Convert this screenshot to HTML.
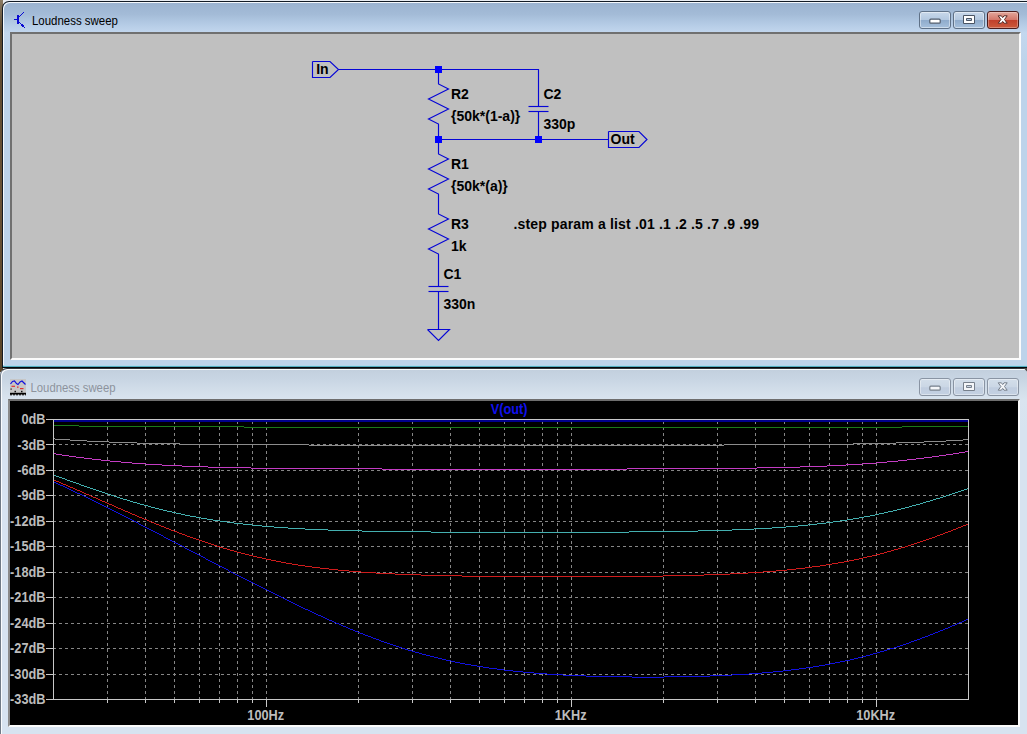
<!DOCTYPE html>
<html><head><meta charset="utf-8"><title>Loudness sweep</title>
<style>
html,body{margin:0;padding:0;}
body{width:1027px;height:734px;overflow:hidden;position:relative;background:#e9edf2;font-family:"Liberation Sans",sans-serif;}
.win{position:absolute;box-sizing:border-box;}
#w1{left:2px;top:1px;width:1040px;height:367px;border:1px solid #141c26;border-bottom-color:#04080c;border-radius:7px 7px 0 0;
 background:linear-gradient(to bottom,#9bb3d0 0px,#a3bbd7 12px,#b4cbe5 22px,#c3d7ee 31px,#bdd3ea 60px,#bdd3ea 100%);
 box-shadow:inset 1px 1px 0 #f4f8fc;}
#w1 .bl{position:absolute;left:0;right:0;bottom:0;height:1px;background:#52acc0;}
#w1 .bl2{position:absolute;left:0;right:0;bottom:1px;height:1px;background:#b2d6ea;}
#c1{position:absolute;left:10px;top:32px;width:1011px;height:328px;box-sizing:border-box;background:#c0c0c0;
 border-top:2px solid #707070;border-left:2px solid #707070;border-right:2px solid #fbfbfb;border-bottom:2px solid #fbfbfb;}
#w2{left:0px;top:368px;width:1041px;height:380px;border:1px solid #707a86;border-top-color:#2c3238;border-radius:7px 7px 0 0;
 background:linear-gradient(to bottom,#c2cfdd 0px,#c8d5e3 10px,#d1dde9 20px,#d9e4ef 31px,#d7e3f0 60px,#d7e3f0 100%);
 box-shadow:inset 1px 1px 0 #fafcfe;}
#c2{position:absolute;left:8px;top:399px;width:1012px;height:328px;box-sizing:border-box;background:#000;
 border-top:2px solid #6e6e6e;border-left:2px solid #8a8a8a;border-right:2px solid #fbfbfb;border-bottom:2px solid #fbfbfb;}
.title{position:absolute;font-size:12.4px;white-space:nowrap;}
.btn{position:absolute;box-sizing:border-box;width:32px;height:18px;border-radius:3px;}
.b1{border:1px solid #5f7187;background:linear-gradient(to bottom,#c8d8ea 0,#b3c8e0 48%,#8fabcb 52%,#a6c0dc 100%);box-shadow:inset 0 0 0 1px rgba(255,255,255,.45);}
.b1.close{border:1px solid #4a1c1c;background:linear-gradient(to bottom,#e3a79c 0,#d4776a 48%,#c0402c 52%,#cc5a3c 100%);box-shadow:inset 0 0 0 1px rgba(255,255,255,.3);}
.b2{border:1px solid #8994a3;background:linear-gradient(to bottom,#d3deea 0,#cbd7e5 48%,#c0cddf 55%,#c4d1e2 100%);box-shadow:inset 0 0 0 1px rgba(255,255,255,.4);}
svg{position:absolute;left:0;top:0;}
</style></head><body>
<div style="position:absolute;left:0;top:0;width:3px;height:372px;background:linear-gradient(to bottom,#8a7a62 0,#5e4a30 30px,#6a5236 200px,#5a4428 372px);"></div>
<div class="win" id="w1"><div class="bl2"></div><div class="bl"></div></div>
<div id="c1"></div>
<div class="win" id="w2"></div>
<div id="c2"></div>
<div class="btn b1" style="left:919px;top:11px;"></div>
<div class="btn b1" style="left:953px;top:11px;"></div>
<div class="btn b1 close" style="left:987px;top:11px;"></div>
<div class="btn b2" style="left:919px;top:378px;"></div>
<div class="btn b2" style="left:953px;top:378px;"></div>
<div class="btn b2" style="left:987px;top:378px;"></div>
<svg width="1027" height="734" viewBox="0 0 1027 734">
<g font-family="Liberation Sans, sans-serif" font-size="12.2px">
<text x="32" y="25" textLength="86" lengthAdjust="spacingAndGlyphs" fill="#000">Loudness sweep</text>
<text x="30.5" y="391.6" textLength="85" lengthAdjust="spacingAndGlyphs" fill="#8d939d">Loudness sweep</text>
</g>
<g fill="none" stroke="#0606d6" stroke-width="1.15" stroke-linejoin="miter"><polyline points="338.5,69.5 538.5,69.5 538.5,89.0"/><polyline points="438.5,69.5 438.5,79.0"/><polyline points="438.5,79.0 438.5,84.0 448.5,89.0 428.5,99.0 448.5,109.0 428.5,119.0 438.5,124.0 438.5,129.0"/><polyline points="438.5,129.0 438.5,149.0"/><polyline points="538.5,89.0 538.5,106.5"/><polyline points="538.5,111.5 538.5,129.0"/><polyline points="528.5,106.5 548.5,106.5"/><polyline points="528.5,111.5 548.5,111.5"/><polyline points="538.5,129.0 538.5,139.5"/><polyline points="438.5,139.5 608.0,139.5"/><polyline points="438.5,149.0 438.5,154.0 448.5,159.0 428.5,169.0 448.5,179.0 428.5,189.0 438.5,194.0 438.5,199.0"/><polyline points="438.5,199.0 438.5,209.0"/><polyline points="438.5,209.0 438.5,214.0 448.5,219.0 428.5,229.0 448.5,239.0 428.5,249.0 438.5,254.0 438.5,259.0"/><polyline points="438.5,259.0 438.5,269.0"/><polyline points="438.5,269.0 438.5,286.5"/><polyline points="438.5,291.5 438.5,309.0"/><polyline points="428.5,286.5 448.5,286.5"/><polyline points="428.5,291.5 448.5,291.5"/><polyline points="438.5,309.0 438.5,329.5"/><polyline points="427.5,329.5 449.5,329.5 438.5,340.5 427.5,329.5"/><polyline points="312.5,61.5 330.0,61.5 338.5,69.5 330.0,77.5 312.5,77.5 312.5,61.5"/><polyline points="608.5,131.5 639.0,131.5 647.0,139.5 639.0,147.5 608.5,147.5 608.5,131.5"/></g><rect x="435.0" y="66.0" width="7" height="7" fill="#0000ff" shape-rendering="crispEdges"/><rect x="435.0" y="136.0" width="7" height="7" fill="#0000ff" shape-rendering="crispEdges"/><rect x="535.0" y="136.0" width="7" height="7" fill="#0000ff" shape-rendering="crispEdges"/><g fill="#000" font-family="Liberation Sans, sans-serif" font-weight="bold" font-size="14px"><text x="451.0" y="98.6">R2</text><text x="451.0" y="120.6">{50k*(1-a)}</text><text x="451.0" y="168.6">R1</text><text x="451.0" y="190.6">{50k*(a)}</text><text x="451.0" y="228.6">R3</text><text x="451.0" y="250.6">1k</text><text x="443.5" y="278.6">C1</text><text x="443.5" y="308.6">330n</text><text x="543.5" y="98.6">C2</text><text x="543.5" y="128.6">330p</text><text x="513.5" y="228.8" textLength="245.5" lengthAdjust="spacing">.step param a list .01 .1 .2 .5 .7 .9 .99</text><text x="316.2" y="74.4">In</text><text x="610.5" y="144.4">Out</text></g>
<g stroke="#868686" stroke-width="1" stroke-dasharray="3 3" shape-rendering="crispEdges"><line x1="107.5" y1="421" x2="107.5" y2="699"/><line x1="145.5" y1="421" x2="145.5" y2="699"/><line x1="174.5" y1="421" x2="174.5" y2="699"/><line x1="199.5" y1="421" x2="199.5" y2="699"/><line x1="219.5" y1="421" x2="219.5" y2="699"/><line x1="237.5" y1="421" x2="237.5" y2="699"/><line x1="252.5" y1="421" x2="252.5" y2="699"/><line x1="266.5" y1="421" x2="266.5" y2="699"/><line x1="358.5" y1="421" x2="358.5" y2="699"/><line x1="412.5" y1="421" x2="412.5" y2="699"/><line x1="450.5" y1="421" x2="450.5" y2="699"/><line x1="479.5" y1="421" x2="479.5" y2="699"/><line x1="504.5" y1="421" x2="504.5" y2="699"/><line x1="524.5" y1="421" x2="524.5" y2="699"/><line x1="542.5" y1="421" x2="542.5" y2="699"/><line x1="557.5" y1="421" x2="557.5" y2="699"/><line x1="571.5" y1="421" x2="571.5" y2="699"/><line x1="663.5" y1="421" x2="663.5" y2="699"/><line x1="717.5" y1="421" x2="717.5" y2="699"/><line x1="755.5" y1="421" x2="755.5" y2="699"/><line x1="784.5" y1="421" x2="784.5" y2="699"/><line x1="809.5" y1="421" x2="809.5" y2="699"/><line x1="829.5" y1="421" x2="829.5" y2="699"/><line x1="847.5" y1="421" x2="847.5" y2="699"/><line x1="862.5" y1="421" x2="862.5" y2="699"/><line x1="876.5" y1="421" x2="876.5" y2="699"/><line x1="53" y1="444.5" x2="968" y2="444.5"/><line x1="53" y1="470.5" x2="968" y2="470.5"/><line x1="53" y1="495.5" x2="968" y2="495.5"/><line x1="53" y1="521.5" x2="968" y2="521.5"/><line x1="53" y1="546.5" x2="968" y2="546.5"/><line x1="53" y1="572.5" x2="968" y2="572.5"/><line x1="53" y1="597.5" x2="968" y2="597.5"/><line x1="53" y1="623.5" x2="968" y2="623.5"/><line x1="53" y1="648.5" x2="968" y2="648.5"/><line x1="53" y1="674.5" x2="968" y2="674.5"/></g>
<g fill="none" shape-rendering="crispEdges"><path d="M54 482.5h2M56 483.5h2M58 484.5h2M60 485.5h3M63 486.5h2M65 487.5h2M67 488.5h2M69 489.5h2M71 490.5h2M73 491.5h2M75 492.5h2M77 493.5h3M80 494.5h2M82 495.5h2M84 496.5h2M86 497.5h2M88 498.5h2M90 499.5h2M92 500.5h2M94 501.5h2M96 502.5h2M98 503.5h2M100 504.5h2M102 505.5h2M104 506.5h2M106 507.5h2M108 508.5h2M110 509.5h2M112 510.5h2M114 511.5h2M116 512.5h2M118 513.5h2M120 514.5h2M122 515.5h2M124 516.5h2M126 517.5h2M128 518.5h2M130 519.5h2M132 520.5h2M134 521.5h2M136 522.5h2M138 523.5h1M139 524.5h2M141 525.5h2M143 526.5h2M145 527.5h2M147 528.5h2M149 529.5h2M151 530.5h2M153 531.5h2M155 532.5h2M157 533.5h2M159 534.5h2M161 535.5h2M163 536.5h1M164 537.5h2M166 538.5h2M168 539.5h2M170 540.5h2M172 541.5h2M174 542.5h2M176 543.5h2M178 544.5h2M180 545.5h2M182 546.5h2M184 547.5h1M185 548.5h2M187 549.5h2M189 550.5h2M191 551.5h2M193 552.5h2M195 553.5h2M197 554.5h2M199 555.5h2M201 556.5h2M203 557.5h2M205 558.5h1M206 559.5h2M208 560.5h2M210 561.5h2M212 562.5h2M214 563.5h2M216 564.5h2M218 565.5h2M220 566.5h2M222 567.5h2M224 568.5h2M226 569.5h2M228 570.5h1M229 571.5h2M231 572.5h2M233 573.5h2M235 574.5h2M237 575.5h2M239 576.5h2M241 577.5h2M243 578.5h2M245 579.5h2M247 580.5h2M249 581.5h2M251 582.5h2M253 583.5h2M255 584.5h2M257 585.5h2M259 586.5h2M261 587.5h2M263 588.5h2M265 589.5h2M267 590.5h2M269 591.5h2M271 592.5h2M273 593.5h2M275 594.5h2M277 595.5h2M279 596.5h2M281 597.5h2M283 598.5h2M285 599.5h2M287 600.5h2M289 601.5h2M291 602.5h2M293 603.5h2M295 604.5h2M297 605.5h2M299 606.5h2M301 607.5h2M303 608.5h2M305 609.5h3M308 610.5h2M310 611.5h2M312 612.5h2M314 613.5h2M316 614.5h2M318 615.5h3M321 616.5h2M323 617.5h2M325 618.5h2M327 619.5h2M329 620.5h3M332 621.5h2M334 622.5h2M336 623.5h3M339 624.5h2M341 625.5h2M343 626.5h3M346 627.5h2M348 628.5h2M350 629.5h3M353 630.5h2M355 631.5h3M358 632.5h2M360 633.5h3M363 634.5h2M365 635.5h3M368 636.5h3M371 637.5h2M373 638.5h3M376 639.5h3M379 640.5h2M381 641.5h3M384 642.5h3M387 643.5h3M390 644.5h3M393 645.5h3M396 646.5h3M399 647.5h3M402 648.5h3M405 649.5h3M408 650.5h4M412 651.5h3M415 652.5h4M419 653.5h3M422 654.5h4M426 655.5h4M430 656.5h4M434 657.5h4M438 658.5h4M442 659.5h4M446 660.5h5M451 661.5h4M455 662.5h5M460 663.5h5M465 664.5h6M471 665.5h6M477 666.5h6M483 667.5h6M489 668.5h8M497 669.5h7M504 670.5h9M513 671.5h10M523 672.5h11M534 673.5h13M547 674.5h16M563 675.5h23M586 676.5h46M632 677.5h32M664 676.5h46M710 675.5h22M732 674.5h17M749 673.5h13M762 672.5h11M773 671.5h10M783 670.5h8M791 669.5h8M799 668.5h7M806 667.5h7M813 666.5h6M819 665.5h6M825 664.5h5M830 663.5h5M835 662.5h5M840 661.5h5M845 660.5h5M850 659.5h4M854 658.5h4M858 657.5h4M862 656.5h4M866 655.5h4M870 654.5h3M873 653.5h4M877 652.5h3M880 651.5h4M884 650.5h3M887 649.5h3M890 648.5h4M894 647.5h3M897 646.5h3M900 645.5h3M903 644.5h3M906 643.5h3M909 642.5h2M911 641.5h3M914 640.5h3M917 639.5h3M920 638.5h2M922 637.5h3M925 636.5h3M928 635.5h2M930 634.5h3M933 633.5h2M935 632.5h3M938 631.5h2M940 630.5h3M943 629.5h2M945 628.5h3M948 627.5h2M950 626.5h2M952 625.5h3M955 624.5h2M957 623.5h2M959 622.5h3M962 621.5h2M964 620.5h2M966 619.5h2M968 618.5h1" stroke="#1212e0" stroke-width="1"/><path d="M54 480.5h2M56 481.5h3M59 482.5h2M61 483.5h2M63 484.5h3M66 485.5h2M68 486.5h2M70 487.5h3M73 488.5h2M75 489.5h2M77 490.5h3M80 491.5h2M82 492.5h2M84 493.5h2M86 494.5h3M89 495.5h2M91 496.5h2M93 497.5h3M96 498.5h2M98 499.5h2M100 500.5h2M102 501.5h3M105 502.5h2M107 503.5h2M109 504.5h3M112 505.5h2M114 506.5h2M116 507.5h2M118 508.5h3M121 509.5h2M123 510.5h2M125 511.5h3M128 512.5h2M130 513.5h2M132 514.5h3M135 515.5h2M137 516.5h2M139 517.5h3M142 518.5h2M144 519.5h3M147 520.5h2M149 521.5h2M151 522.5h3M154 523.5h2M156 524.5h3M159 525.5h2M161 526.5h3M164 527.5h2M166 528.5h3M169 529.5h2M171 530.5h3M174 531.5h3M177 532.5h2M179 533.5h3M182 534.5h3M185 535.5h2M187 536.5h3M190 537.5h3M193 538.5h3M196 539.5h3M199 540.5h3M202 541.5h3M205 542.5h3M208 543.5h3M211 544.5h3M214 545.5h3M217 546.5h3M220 547.5h3M223 548.5h4M227 549.5h3M230 550.5h4M234 551.5h3M237 552.5h4M241 553.5h4M245 554.5h4M249 555.5h4M253 556.5h4M257 557.5h5M262 558.5h4M266 559.5h5M271 560.5h5M276 561.5h5M281 562.5h5M286 563.5h6M292 564.5h6M298 565.5h7M305 566.5h7M312 567.5h8M320 568.5h9M329 569.5h9M338 570.5h11M349 571.5h12M361 572.5h15M376 573.5h19M395 574.5h26M421 575.5h41M462 576.5h201M663 575.5h41M704 574.5h26M730 573.5h18M748 572.5h15M763 571.5h13M776 570.5h11M787 569.5h9M796 568.5h9M805 567.5h7M812 566.5h8M820 565.5h6M826 564.5h6M832 563.5h6M838 562.5h6M844 561.5h5M849 560.5h5M854 559.5h5M859 558.5h4M863 557.5h4M867 556.5h5M872 555.5h4M876 554.5h4M880 553.5h4M884 552.5h3M887 551.5h4M891 550.5h3M894 549.5h4M898 548.5h3M901 547.5h4M905 546.5h3M908 545.5h3M911 544.5h3M914 543.5h3M917 542.5h3M920 541.5h3M923 540.5h3M926 539.5h3M929 538.5h3M932 537.5h3M935 536.5h2M937 535.5h3M940 534.5h3M943 533.5h2M945 532.5h3M948 531.5h3M951 530.5h2M953 529.5h3M956 528.5h2M958 527.5h3M961 526.5h2M963 525.5h3M966 524.5h2M968 523.5h1" stroke="#d01c1c" stroke-width="1"/><path d="M54 475.5h2M56 476.5h3M59 477.5h3M62 478.5h3M65 479.5h2M67 480.5h3M70 481.5h3M73 482.5h3M76 483.5h3M79 484.5h2M81 485.5h3M84 486.5h3M87 487.5h3M90 488.5h3M93 489.5h3M96 490.5h3M99 491.5h3M102 492.5h3M105 493.5h3M108 494.5h3M111 495.5h3M114 496.5h3M117 497.5h3M120 498.5h3M123 499.5h4M127 500.5h3M130 501.5h3M133 502.5h4M137 503.5h3M140 504.5h4M144 505.5h4M148 506.5h3M151 507.5h4M155 508.5h4M159 509.5h4M163 510.5h4M167 511.5h5M172 512.5h4M176 513.5h5M181 514.5h4M185 515.5h5M190 516.5h6M196 517.5h5M201 518.5h6M207 519.5h6M213 520.5h7M220 521.5h7M227 522.5h7M234 523.5h9M243 524.5h9M252 525.5h10M262 526.5h12M274 527.5h14M288 528.5h17M305 529.5h23M328 530.5h34M362 531.5h69M431 532.5h198M629 531.5h69M698 530.5h34M732 529.5h22M754 528.5h18M772 527.5h14M786 526.5h12M798 525.5h10M808 524.5h9M817 523.5h9M826 522.5h7M833 521.5h7M840 520.5h7M847 519.5h6M853 518.5h6M859 517.5h5M864 516.5h6M870 515.5h5M875 514.5h4M879 513.5h5M884 512.5h4M888 511.5h5M893 510.5h4M897 509.5h4M901 508.5h4M905 507.5h4M909 506.5h3M912 505.5h4M916 504.5h4M920 503.5h3M923 502.5h3M926 501.5h4M930 500.5h3M933 499.5h3M936 498.5h4M940 497.5h3M943 496.5h3M946 495.5h3M949 494.5h3M952 493.5h3M955 492.5h3M958 491.5h3M961 490.5h3M964 489.5h3M967 488.5h2" stroke="#44b0b0" stroke-width="1"/><path d="M54 453.5h2M56 454.5h6M62 455.5h7M69 456.5h7M76 457.5h8M84 458.5h8M92 459.5h9M101 460.5h9M110 461.5h11M121 462.5h11M132 463.5h14M146 464.5h16M162 465.5h20M182 466.5h26M208 467.5h43M251 468.5h131M382 469.5h245M627 468.5h130M757 467.5h43M800 466.5h27M827 465.5h19M846 464.5h16M862 463.5h14M876 462.5h11M887 461.5h11M898 460.5h9M907 459.5h9M916 458.5h8M924 457.5h8M932 456.5h7M939 455.5h7M946 454.5h7M953 453.5h6M959 452.5h6M965 451.5h4" stroke="#c43cc4" stroke-width="1"/><path d="M54 438.5h1M55 439.5h15M70 440.5h17M87 441.5h22M109 442.5h28M137 443.5h43M180 444.5h129M309 445.5h415M724 444.5h129M853 443.5h43M896 442.5h28M924 441.5h22M946 440.5h17M963 439.5h6" stroke="#8c8c8c" stroke-width="1"/><path d="M54 425.5h25M79 426.5h165M244 427.5h658M902 426.5h67" stroke="#1a7a1a" stroke-width="1"/><path d="M54 420.5h915" stroke="#00008c" stroke-width="1"/></g>
<rect x="54" y="420" width="915" height="2" fill="#00008c" shape-rendering="crispEdges"/>
<g stroke="#c8c8c8" stroke-width="1" shape-rendering="crispEdges"><line x1="53.5" y1="419" x2="53.5" y2="700"/><line x1="968.5" y1="419" x2="968.5" y2="700"/><line x1="46" y1="419.5" x2="969" y2="419.5"/><line x1="46" y1="699.5" x2="969" y2="699.5"/><line x1="46" y1="444.5" x2="54" y2="444.5"/><line x1="46" y1="470.5" x2="54" y2="470.5"/><line x1="46" y1="495.5" x2="54" y2="495.5"/><line x1="46" y1="521.5" x2="54" y2="521.5"/><line x1="46" y1="546.5" x2="54" y2="546.5"/><line x1="46" y1="572.5" x2="54" y2="572.5"/><line x1="46" y1="597.5" x2="54" y2="597.5"/><line x1="46" y1="623.5" x2="54" y2="623.5"/><line x1="46" y1="648.5" x2="54" y2="648.5"/><line x1="46" y1="674.5" x2="54" y2="674.5"/><line x1="107.5" y1="699" x2="107.5" y2="703"/><line x1="145.5" y1="699" x2="145.5" y2="703"/><line x1="174.5" y1="699" x2="174.5" y2="703"/><line x1="199.5" y1="699" x2="199.5" y2="703"/><line x1="219.5" y1="699" x2="219.5" y2="703"/><line x1="237.5" y1="699" x2="237.5" y2="703"/><line x1="252.5" y1="699" x2="252.5" y2="703"/><line x1="266.5" y1="699" x2="266.5" y2="707"/><line x1="358.5" y1="699" x2="358.5" y2="703"/><line x1="412.5" y1="699" x2="412.5" y2="703"/><line x1="450.5" y1="699" x2="450.5" y2="703"/><line x1="479.5" y1="699" x2="479.5" y2="703"/><line x1="504.5" y1="699" x2="504.5" y2="703"/><line x1="524.5" y1="699" x2="524.5" y2="703"/><line x1="542.5" y1="699" x2="542.5" y2="703"/><line x1="557.5" y1="699" x2="557.5" y2="703"/><line x1="571.5" y1="699" x2="571.5" y2="707"/><line x1="663.5" y1="699" x2="663.5" y2="703"/><line x1="717.5" y1="699" x2="717.5" y2="703"/><line x1="755.5" y1="699" x2="755.5" y2="703"/><line x1="784.5" y1="699" x2="784.5" y2="703"/><line x1="809.5" y1="699" x2="809.5" y2="703"/><line x1="829.5" y1="699" x2="829.5" y2="703"/><line x1="847.5" y1="699" x2="847.5" y2="703"/><line x1="862.5" y1="699" x2="862.5" y2="703"/><line x1="876.5" y1="699" x2="876.5" y2="707"/></g>
<g fill="#bcbcbc" font-family="Liberation Sans, sans-serif" font-weight="bold" font-size="14px"><text transform="translate(45.5,424.0) scale(0.91,1)" text-anchor="end">0dB</text><text transform="translate(45.5,449.5) scale(0.91,1)" text-anchor="end">-3dB</text><text transform="translate(45.5,474.9) scale(0.91,1)" text-anchor="end">-6dB</text><text transform="translate(45.5,500.4) scale(0.91,1)" text-anchor="end">-9dB</text><text transform="translate(45.5,525.8) scale(0.91,1)" text-anchor="end">-12dB</text><text transform="translate(45.5,551.3) scale(0.91,1)" text-anchor="end">-15dB</text><text transform="translate(45.5,576.7) scale(0.91,1)" text-anchor="end">-18dB</text><text transform="translate(45.5,602.2) scale(0.91,1)" text-anchor="end">-21dB</text><text transform="translate(45.5,627.6) scale(0.91,1)" text-anchor="end">-24dB</text><text transform="translate(45.5,653.1) scale(0.91,1)" text-anchor="end">-27dB</text><text transform="translate(45.5,678.5) scale(0.91,1)" text-anchor="end">-30dB</text><text transform="translate(45.5,704.0) scale(0.91,1)" text-anchor="end">-33dB</text><text transform="translate(265.7,720) scale(0.91,1)" text-anchor="middle">100Hz</text><text transform="translate(570.7,720) scale(0.91,1)" text-anchor="middle">1KHz</text><text transform="translate(875.7,720) scale(0.91,1)" text-anchor="middle">10KHz</text></g>
<text transform="translate(509.2,414) scale(0.91,1)" text-anchor="middle" fill="#1010f0" font-family="Liberation Sans, sans-serif" font-weight="bold" font-size="14px">V(out)</text>
<g id="glyphs">
<!-- active window -->
<rect x="929.8" y="19.2" width="10.4" height="4" rx="1" fill="#fff" stroke="#505c6c" stroke-width="1.2"/>
<path d="M963.5 15.5h11v8h-11z M966.5 18.5v2h5v-2z" fill="#fff" fill-rule="evenodd" stroke="#4a5564" stroke-width="1"/>
<path d="M998.2 15.8 L1001.4 15.8 L1002.7 17.6 L1004 15.8 L1007.2 15.8 L1004.5 19.5 L1007.2 23.2 L1004 23.2 L1002.7 21.4 L1001.4 23.2 L998.2 23.2 L1000.9 19.5 Z" fill="#fff" stroke="#5a2a24" stroke-width="1" stroke-linejoin="round"/>
<!-- inactive window -->
<rect x="929.8" y="386.2" width="10.4" height="4" rx="1" fill="#f4f6f9" stroke="#77808c" stroke-width="1.2"/>
<path d="M963.5 382.5h11v8h-11z M966.5 385.5v2h5v-2z" fill="#f4f6f9" fill-rule="evenodd" stroke="#77808c" stroke-width="1"/>
<path d="M998.2 382.8 L1001.4 382.8 L1002.7 384.6 L1004 382.8 L1007.2 382.8 L1004.5 386.5 L1007.2 390.2 L1004 390.2 L1002.7 388.4 L1001.4 390.2 L998.2 390.2 L1000.9 386.5 Z" fill="#f4f6f9" stroke="#77808c" stroke-width="1" stroke-linejoin="round"/>
</g>
<path d="M1023.5 368 L1027 368 L1027 371.5 Z" fill="#4a4a48"/>
<g id="icons">
<!-- transistor icon -->
<g fill="#0a0ad2" shape-rendering="crispEdges"><rect x="17" y="15" width="2" height="9"/><rect x="14" y="19" width="3" height="1"/><rect x="19" y="16" width="1" height="1"/><rect x="20" y="15" width="1" height="1"/><rect x="21" y="14" width="1" height="1"/><rect x="22" y="13" width="1" height="1"/><rect x="23" y="12" width="1" height="1"/><rect x="19" y="22" width="1" height="1"/><rect x="20" y="23" width="1" height="1"/><rect x="21" y="24" width="1" height="1"/><rect x="22" y="25" width="1" height="1"/><rect x="23" y="26" width="1" height="1"/><rect x="24" y="27" width="1" height="1"/><rect x="22" y="24" width="1" height="1"/><rect x="21" y="25" width="1" height="1"/><rect x="23" y="25" width="1" height="1"/><rect x="22" y="26" width="1" height="1"/></g>
<!-- waveform icon -->
<rect x="10" y="379" width="16" height="16" fill="#c6c6c6"/>
<polyline points="10.5,384 12.5,381.5 14.5,381 16.5,383.5 18,384.5 20,382 22,381 24,383 25.5,384.5" fill="none" stroke="#1010e0" stroke-width="1.2"/>
<g stroke="#e03030" stroke-width="1.2"><line x1="11.5" y1="386.3" x2="15" y2="386.3"/><line x1="17" y1="387.2" x2="18.5" y2="387.2"/><line x1="20" y1="388.6" x2="23.5" y2="388.6"/></g>
<g fill="#111"><rect x="10.5" y="388.5" width="1.2" height="1.2"/><rect x="14.5" y="390.8" width="1.5" height="1.5"/><rect x="21" y="390.8" width="1.5" height="1.5"/></g>
<line x1="10" y1="393.6" x2="26" y2="393.6" stroke="#000" stroke-width="1.6"/>
<line x1="10" y1="394.8" x2="26" y2="394.8" stroke="#000" stroke-width="1" stroke-dasharray="2 1"/>
</g>

</svg>
</body></html>
